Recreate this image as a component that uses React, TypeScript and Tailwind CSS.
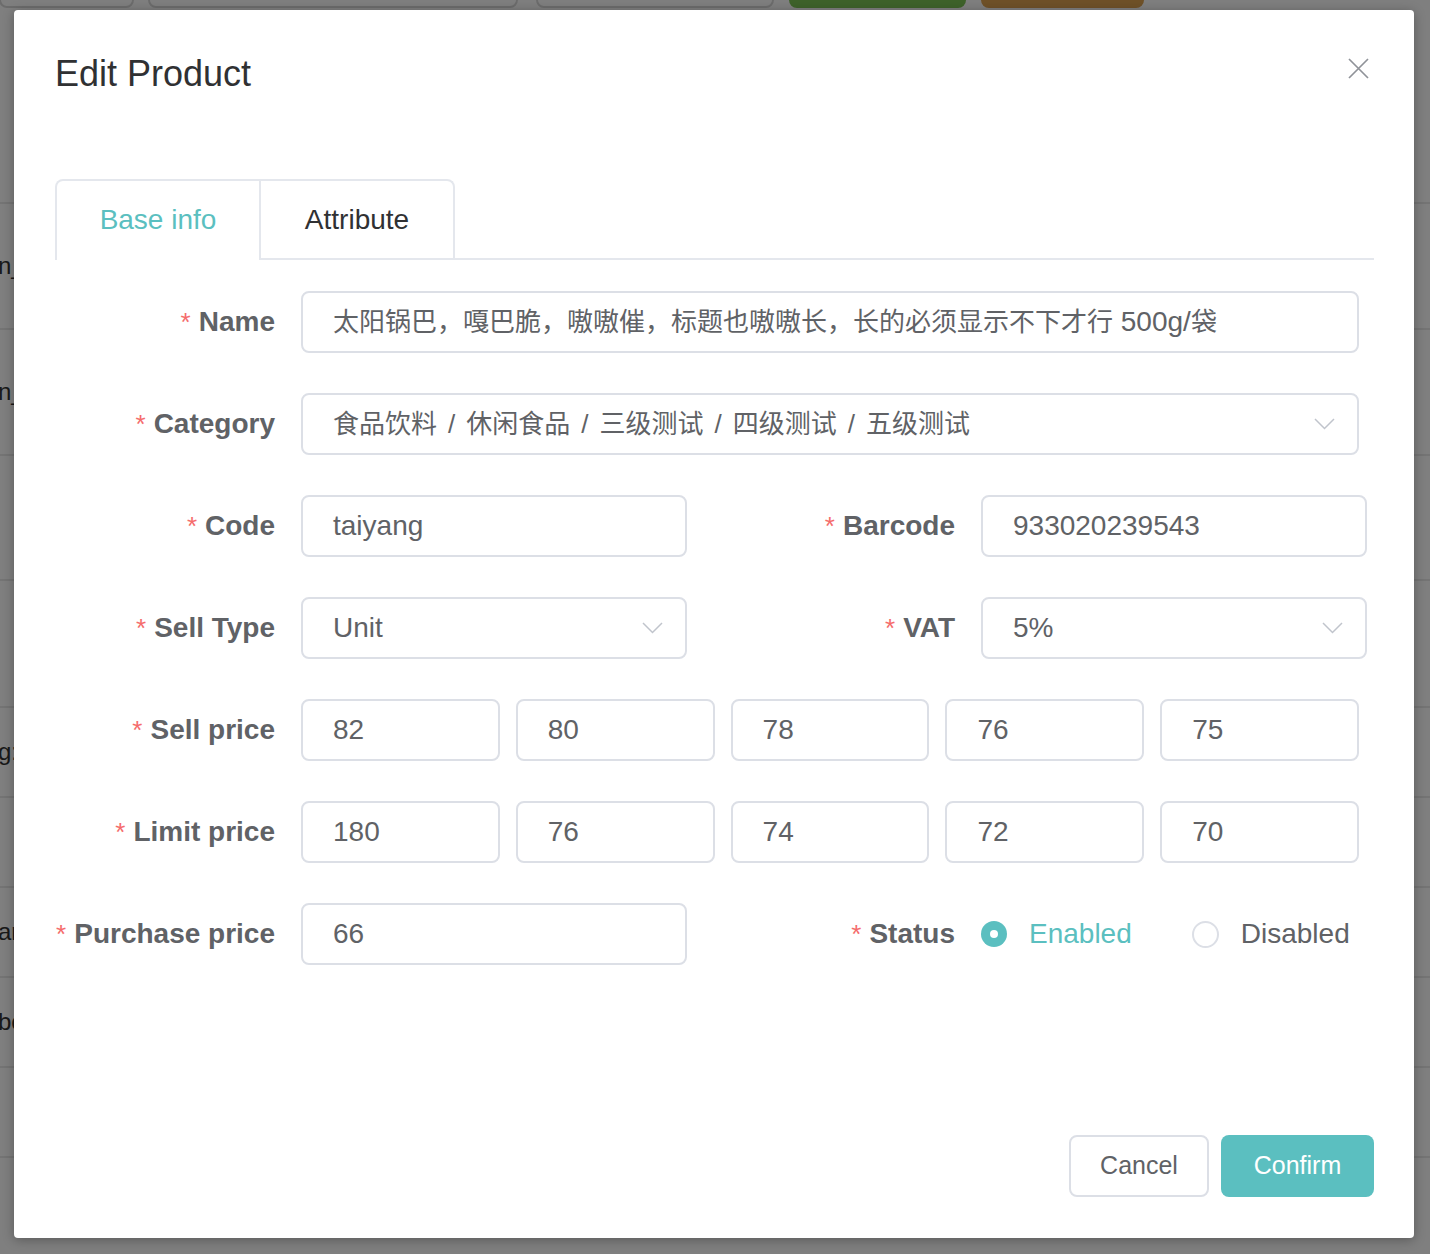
import React from 'react'

const bgRows = [
  { h: 'h-[126px]', text: 'n_sale' },
  { h: 'h-[126px]', text: 'n_stock' },
  { h: 'h-[125px]', text: '' },
  { h: 'h-[127px]', text: '' },
  { h: 'h-[90px]', text: 'g: 500' },
  { h: 'h-[90px]', text: '' },
  { h: 'h-[90px]', text: 'ar' },
  { h: 'h-[90px]', text: 'bo' },
  { h: 'h-[90px]', text: '' },
  { h: 'h-[90px]', text: '' },
]

function Chevron() {
  return (
    <svg width="21" height="12" viewBox="0 0 21 12" fill="none">
      <polyline points="1,1 10.5,10.5 20,1" stroke="#c0c4cc" strokeWidth="1.5" />
    </svg>
  )
}

function Label({ children, className = '' }: { children: React.ReactNode; className?: string }) {
  return (
    <label className={`w-[246px] shrink-0 pr-[26px] text-right text-[28px] font-bold text-[#606266] ${className}`}>
      <span className="mr-[8px] text-[26px] font-normal text-[#f56c6c]">*</span>
      {children}
    </label>
  )
}

function Field({ children, className = '' }: { children: React.ReactNode; className?: string }) {
  return (
    <div
      className={`flex h-[62px] items-center justify-between rounded-[8px] border-2 border-[#dcdfe6] bg-white pl-[30px] pr-[22px] text-[28px] text-[#606266] ${className}`}
    >
      {children}
    </div>
  )
}

function Radio({ checked, label }: { checked?: boolean; label: string }) {
  return (
    <div className="flex items-center">
      {checked ? (
        <span className="flex h-[26px] w-[26px] items-center justify-center rounded-full bg-[#5bbfc0]">
          <span className="h-[8px] w-[8px] rounded-full bg-white" />
        </span>
      ) : (
        <span className="h-[27px] w-[27px] rounded-full border-2 border-[#dcdfe6] bg-white" />
      )}
      <span className={`ml-[22px] text-[28px] ${checked ? 'text-[#5bbfc0]' : 'text-[#606266]'}`}>{label}</span>
    </div>
  )
}

const sellPrices = ['82', '80', '78', '76', '75']
const limitPrices = ['180', '76', '74', '72', '70']
const category = ['食品饮料', '休闲食品', '三级测试', '四级测试', '五级测试']

export default function App() {
  return (
    <div className="relative h-[1254px] w-[1430px] overflow-hidden bg-white font-['Liberation_Sans','Noto_Sans_CJK_SC',sans-serif]">
      {/* Page behind the dialog */}
      <div className="-mt-[54px] flex h-[62px]">
        <div className="-ml-[1px] w-[135px] rounded-[8px] border-2 border-[#d9d9d9]" />
        <div className="ml-[14px] w-[370px] rounded-[8px] border-2 border-[#d9d9d9]" />
        <div className="ml-[18px] w-[238px] rounded-[8px] border-2 border-[#d9d9d9]" />
        <div className="ml-[15px] w-[177px] rounded-[8px] bg-[#7cc454]" />
        <div className="ml-[15px] w-[163px] rounded-[8px] bg-[#dea250]" />
      </div>
      <div className="h-[194px]" />
      <div>
        {bgRows.map((row, i) => (
          <div key={i} className={`flex items-center border-t-2 border-[#e8e8e8] ${row.h}`}>
            <span className="-ml-[2px] text-[24px] text-[#333]">{row.text}</span>
          </div>
        ))}
      </div>

      {/* Overlay */}
      <div className="absolute inset-0 bg-black/50" />

      {/* Dialog */}
      <div className="absolute inset-0 flex pl-[14px] pt-[10px]">
        <div className="flex h-[1228px] w-[1400px] flex-col rounded-[4px] bg-white pb-[41px] pl-[41px] pr-[40px] pt-[41px] shadow-[0_2px_12px_rgba(0,0,0,0.3)]">
          <div className="flex items-start justify-between">
            <h2 className="text-[36px] leading-[46px] text-[#303133]">Edit Product</h2>
            <button className="mr-[5px] mt-[7px]">
              <svg width="21" height="21" viewBox="0 0 21 21" fill="none">
                <path d="M1 1L20 20M20 1L1 20" stroke="#909399" strokeWidth="1.7" />
              </svg>
            </button>
          </div>

          {/* Tabs */}
          <div className="mt-[82px] flex border-b-2 border-[#e4e7ed]">
            <div className="-mb-[2px] flex rounded-t-[8px] border-2 border-b-0 border-[#e4e7ed]">
              <div className="flex h-[79px] w-[202px] items-center justify-center border-b-2 border-white text-[28px] text-[#5bbfc0]">
                Base info
              </div>
              <div className="flex h-[79px] w-[194px] items-center justify-center border-b-2 border-l-2 border-[#e4e7ed] text-[28px] text-[#303133]">
                Attribute
              </div>
            </div>
          </div>

          {/* Form */}
          <div className="mt-[31px] flex flex-col gap-[40px]">
            <div className="flex items-center">
              <Label>Name</Label>
              <Field className="w-[1058px]">
                <span className="whitespace-nowrap">
                  <span className="text-[26px]">太阳锅巴，嘎巴脆，嗷嗷催，标题也嗷嗷长，长的必须显示不下才行</span>
                  <span> 500g/</span>
                  <span className="text-[26px]">袋</span>
                </span>
              </Field>
            </div>

            <div className="flex items-center">
              <Label>Category</Label>
              <Field className="w-[1058px]">
                <span className="whitespace-nowrap text-[26px]">
                  {category.map((c, i) => (
                    <React.Fragment key={c}>
                      {i > 0 && <span className="mx-[11px]">/</span>}
                      {c}
                    </React.Fragment>
                  ))}
                </span>
                <Chevron />
              </Field>
            </div>

            <div className="grid grid-cols-[632px_632px] gap-x-[48px]">
              <div className="flex items-center">
                <Label>Code</Label>
                <Field className="w-[386px]">taiyang</Field>
              </div>
              <div className="flex items-center">
                <Label>Barcode</Label>
                <Field className="w-[386px]">933020239543</Field>
              </div>
            </div>

            <div className="grid grid-cols-[632px_632px] gap-x-[48px]">
              <div className="flex items-center">
                <Label>Sell Type</Label>
                <Field className="w-[386px]">
                  <span>Unit</span>
                  <Chevron />
                </Field>
              </div>
              <div className="flex items-center">
                <Label>VAT</Label>
                <Field className="w-[386px]">
                  <span>5%</span>
                  <Chevron />
                </Field>
              </div>
            </div>

            <div className="flex items-center">
              <Label>Sell price</Label>
              <div className="flex w-[1058px] gap-[16px]">
                {sellPrices.map((p, i) => (
                  <Field key={i} className="flex-1">
                    {p}
                  </Field>
                ))}
              </div>
            </div>

            <div className="flex items-center">
              <Label>Limit price</Label>
              <div className="flex w-[1058px] gap-[16px]">
                {limitPrices.map((p, i) => (
                  <Field key={i} className="flex-1">
                    {p}
                  </Field>
                ))}
              </div>
            </div>

            <div className="grid grid-cols-[632px_632px] gap-x-[48px]">
              <div className="flex items-center">
                <Label>Purchase price</Label>
                <Field className="w-[386px]">66</Field>
              </div>
              <div className="flex h-[62px] items-center">
                <Label>Status</Label>
                <Radio checked label="Enabled" />
                <div className="ml-[60px]">
                  <Radio label="Disabled" />
                </div>
              </div>
            </div>
          </div>

          {/* Footer */}
          <div className="mt-auto flex justify-end gap-[12px]">
            <button className="h-[62px] w-[140px] rounded-[8px] border-2 border-[#dcdfe6] bg-white text-[25px] text-[#606266]">
              Cancel
            </button>
            <button className="h-[62px] w-[153px] rounded-[8px] bg-[#5bbfc0] text-[25px] text-white">
              Confirm
            </button>
          </div>
        </div>
      </div>
    </div>
  )
}
